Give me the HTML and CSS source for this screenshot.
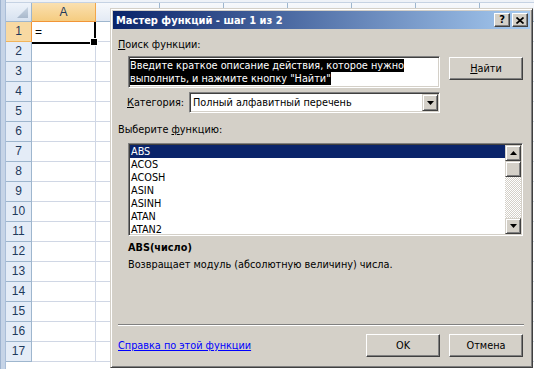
FILE: index.html
```html
<!DOCTYPE html>
<html>
<head>
<meta charset="utf-8">
<link rel="stylesheet" href="styles.css">
</head>
<body>
<div class="sheet">
  <div class="edge"></div>
  <div class="grid">
    <div class="topstrip"></div>
    <div class="row hdr">
      <div class="corner"></div>
      <div class="colh sel">A</div>
      <div class="colh"></div>
      <div class="colh"></div>
      <div class="colh"></div>
      <div class="colh"></div>
      <div class="colh"></div>
      <div class="colh"></div>
      <div class="colh"></div>
    </div>
    <div class="row"><div class="rowh sel">1</div><div class="cells"><div class="a1">=</div></div></div>
    <div class="row"><div class="rowh">2</div><div class="cells"></div></div>
    <div class="row"><div class="rowh">3</div><div class="cells"></div></div>
    <div class="row"><div class="rowh">4</div><div class="cells"></div></div>
    <div class="row"><div class="rowh">5</div><div class="cells"></div></div>
    <div class="row"><div class="rowh">6</div><div class="cells"></div></div>
    <div class="row"><div class="rowh">7</div><div class="cells"></div></div>
    <div class="row"><div class="rowh">8</div><div class="cells"></div></div>
    <div class="row"><div class="rowh">9</div><div class="cells"></div></div>
    <div class="row"><div class="rowh">10</div><div class="cells"></div></div>
    <div class="row"><div class="rowh">11</div><div class="cells"></div></div>
    <div class="row"><div class="rowh">12</div><div class="cells"></div></div>
    <div class="row"><div class="rowh">13</div><div class="cells"></div></div>
    <div class="row"><div class="rowh">14</div><div class="cells"></div></div>
    <div class="row"><div class="rowh">15</div><div class="cells"></div></div>
    <div class="row"><div class="rowh">16</div><div class="cells"></div></div>
    <div class="row"><div class="rowh">17</div><div class="cells"></div></div>
  </div>
</div>

<div class="dialog">
  <div class="titlebar">
    <span class="title">Мастер функций - шаг 1 из 2</span>
    <div class="tbtns">
      <div class="tbtn q">?</div>
      <div class="tbtn"><svg width="8" height="7" viewBox="0 0 8 7"><path d="M0.5 0.5L7.5 6.5M7.5 0.5L0.5 6.5" stroke="#000" stroke-width="1.7" fill="none"/></svg></div>
    </div>
  </div>
  <div class="dbody">
    <div class="lbl lbl1"><u>П</u>оиск функции:</div>
    <div class="search-row">
      <div class="search">
        <div class="seltext">Введите краткое описание действия, которое нужно</div>
        <div class="seltext">выполнить, и нажмите кнопку "Найти"</div>
      </div>
      <div class="btn find"><u>Н</u>айти</div>
    </div>
    <div class="cat-row">
      <span class="cat-lbl"><u>К</u>атегория:</span>
      <div class="combo">
        <span class="combo-val">Полный алфавитный перечень</span>
        <div class="combo-btn"><svg width="7" height="4" viewBox="0 0 7 4"><path d="M0 0H7L3.5 4Z" fill="#000"/></svg></div>
      </div>
    </div>
    <div class="lbl lbl2">Выберите <u>ф</u>ункцию:</div>
    <div class="list">
      <div class="items">
        <div class="item on">ABS</div>
        <div class="item">ACOS</div>
        <div class="item">ACOSH</div>
        <div class="item">ASIN</div>
        <div class="item">ASINH</div>
        <div class="item">ATAN</div>
        <div class="item">ATAN2</div>
      </div>
      <div class="vscroll">
        <div class="sbtn"><svg width="7" height="4" viewBox="0 0 7 4"><path d="M0 4H7L3.5 0Z" fill="#000"/></svg></div>
        <div class="thumb"></div>
        <div class="track"></div>
        <div class="sbtn"><svg width="7" height="4" viewBox="0 0 7 4"><path d="M0 0H7L3.5 4Z" fill="#000"/></svg></div>
      </div>
    </div>
    <div class="fsig">ABS(число)</div>
    <div class="fdesc">Возвращает модуль (абсолютную величину) числа.</div>
    <div class="sep"></div>
    <div class="foot">
      <a class="help">Справка по этой функции</a>
      <div class="btn ok">OK</div>
      <div class="btn">Отмена</div>
    </div>
  </div>
</div>
</body>
</html>
```

FILE: styles.css
```css
* { box-sizing: border-box; }
html, body { margin: 0; padding: 0; }
body {
  width: 534px;
  height: 369px;
  overflow: hidden;
  position: relative;
  background: #fff;
  font-family: "Liberation Sans", Arial, sans-serif;
  font-size: 11px;
  color: #000;
}

/* ---------- spreadsheet ---------- */
.sheet { display: flex; height: 369px; }
.edge {
  width: 6px;
  flex: none;
  background: linear-gradient(to right, #9fb4d0 0 1px, #c6d4e7 1px 5px, #aabed8 5px);
}
.grid { flex: 1; display: flex; flex-direction: column; overflow: hidden; }
.topstrip { height: 3px; flex: none; background: #eef2f8; border-bottom: 1px solid #c5d2e3; }
.row { display: flex; height: 20px; flex: none; }
.row.hdr { height: 19px; }
.corner {
  width: 26px; flex: none; position: relative;
  background: linear-gradient(#eef3fa, #d7e2f0);
  border-right: 1px solid #9eb6ce;
  border-bottom: 1px solid #9eb6ce;
}
.corner::after {
  content: ""; position: absolute; right: 3px; bottom: 3px;
  width: 11px; height: 11px;
  background: linear-gradient(#c9d5e3, #a9b9cc);
  clip-path: polygon(100% 0, 100% 100%, 0 100%);
}
.colh {
  width: 64px; flex: none; text-align: center; line-height: 18px;
  color: #1f3a5c; font-size: 12px;
  background: linear-gradient(#f7f9fc, #e3eaf4);
  border-right: 1px solid #9eb6ce;
  border-bottom: 1px solid #9eb6ce;
}
.colh.sel {
  background: linear-gradient(#fae0b0, #f5cc80);
  border-right-color: #f2a64a;
  border-bottom-color: #f29536;
}
.rowh {
  width: 26px; flex: none; text-align: center; line-height: 19px;
  color: #1f3a5c; font-size: 12px;
  background: #e4ecf7;
  border-right: 1px solid #9eb6ce;
  border-bottom: 1px solid #9eb6ce;
}
.rowh.sel { background: #f8d9a2; border-right-color: #f29536; border-bottom-color: #f2b45a; }
.cells {
  flex: 1; display: flex;
  border-bottom: 1px solid #d0d7e5;
  background: repeating-linear-gradient(to right, transparent 0 63px, #d0d7e5 63px 64px);
}
.a1 {
  position: relative; z-index: 1;
  width: 64px; height: 22px; flex: none;
  padding-left: 3px; line-height: 20px; font-size: 12px;
  background: #fff;
  border-right: 2px solid #000;
  border-bottom: 2px solid #000;
}
.a1::after {
  content: ""; position: absolute; right: -4px; bottom: -4px;
  width: 6px; height: 6px; background: #000; border: 1px solid #fff;
}

/* ---------- dialog ---------- */
.dialog {
  position: absolute; left: 110px; top: 8px;
  width: 423px; height: 360px;
  background: #d4d0c8;
  border: 1px solid; border-color: #d4d0c8 #404040 #404040 #d4d0c8;
  box-shadow: inset 1px 1px #fff, inset -1px -1px #808080;
  padding: 2px;
  display: flex; flex-direction: column;
  font-family: "DejaVu Sans Condensed", "DejaVu Sans", sans-serif;
  font-stretch: condensed;
  font-size: 10.8px;
}
.titlebar {
  height: 18px; flex: none;
  display: flex; align-items: center;
  padding: 0 2px 0 3px;
  background: linear-gradient(to right, #0a246a, #a6caf0);
  color: #fff; font-weight: bold; font-size: 11px;
}
.title { flex: 1; white-space: nowrap; }
.tbtns { display: flex; gap: 2px; }
.tbtn {
  width: 16px; height: 14px;
  display: flex; align-items: center; justify-content: center;
  background: #d4d0c8;
  border: 1px solid; border-color: #fff #404040 #404040 #fff;
  box-shadow: inset -1px -1px #808080;
  color: #000; font-weight: bold; font-size: 11px; line-height: 12px;
}
.dbody { flex: 1; display: flex; flex-direction: column; }
.lbl { line-height: 13px; padding-left: 5px; }
.lbl1 { margin-top: 9px; }
.search-row { display: flex; align-items: flex-start; margin-top: 5px; padding-left: 15px; }
.search {
  width: 312px; height: 32px;
  background: #fff;
  border: 1px solid; border-color: #808080 #fff #fff #808080;
  box-shadow: inset 1px 1px #404040, inset -1px -1px #d4d0c8;
  padding: 2px 1px 0 1px;
}
.seltext {
  width: fit-content;
  background: #000; color: #fff;
  line-height: 13px; white-space: nowrap;
}
.btn {
  width: 74px; height: 23px; flex: none;
  display: flex; align-items: center; justify-content: center;
  background: #d4d0c8;
  border: 1px solid; border-color: #fff #404040 #404040 #fff;
  box-shadow: inset -1px -1px #808080;
}
.find { margin-left: 9px; margin-top: 1px; }
.cat-row { display: flex; align-items: center; margin-top: 4px; padding-left: 14px; }
.cat-lbl { width: 62px; flex: none; }
.combo {
  width: 251px; height: 21px;
  display: flex;
  background: #fff;
  border: 1px solid; border-color: #808080 #fff #fff #808080;
  box-shadow: inset 1px 1px #404040, inset -1px -1px #d4d0c8;
  padding: 1px;
}
.combo-val { flex: 1; padding-left: 2px; line-height: 17px; white-space: nowrap; }
.combo-btn, .sbtn {
  width: 16px; flex: none;
  display: flex; align-items: center; justify-content: center;
  background: #d4d0c8;
  border: 1px solid; border-color: #d4d0c8 #404040 #404040 #d4d0c8;
  box-shadow: inset 1px 1px #fff, inset -1px -1px #808080;
}
.lbl2 { margin-top: 10px; }
.list {
  width: 395px; height: 93px; margin-top: 7px; margin-left: 15px;
  display: flex;
  background: #fff;
  border: 1px solid; border-color: #808080 #fff #fff #808080;
  box-shadow: inset 1px 1px #404040, inset -1px -1px #d4d0c8;
  padding: 1px;
}
.items { flex: 1; }
.item { line-height: 13px; padding-left: 1px; white-space: nowrap; }
.item.on { background: #0a246a; color: #fff; }
.vscroll { width: 16px; flex: none; display: flex; flex-direction: column; }
.sbtn { height: 16px; }
.thumb {
  height: 16px; flex: none;
  background: #d4d0c8;
  border: 1px solid; border-color: #d4d0c8 #404040 #404040 #d4d0c8;
  box-shadow: inset 1px 1px #fff, inset -1px -1px #808080;
}
.track {
  flex: 1;
  background: repeating-conic-gradient(#d4d0c8 0 25%, #fff 0 50%) 0 0 / 2px 2px;
}
.fsig { margin-top: 5px; padding-left: 15px; line-height: 13px; font-weight: bold; }
.fdesc { margin-top: 4px; padding-left: 15px; line-height: 13px; }
.sep {
  margin-top: auto; margin-left: 5px;
  width: 406px; height: 2px;
  border-top: 1px solid #808080; border-bottom: 1px solid #fff;
}
.foot {
  display: flex; align-items: center;
  margin-top: 8px; margin-bottom: 8px;
  padding: 0 7px 0 5px;
  gap: 9px;
}
.help { color: #0000ff; text-decoration: underline; margin-right: auto; }
```
